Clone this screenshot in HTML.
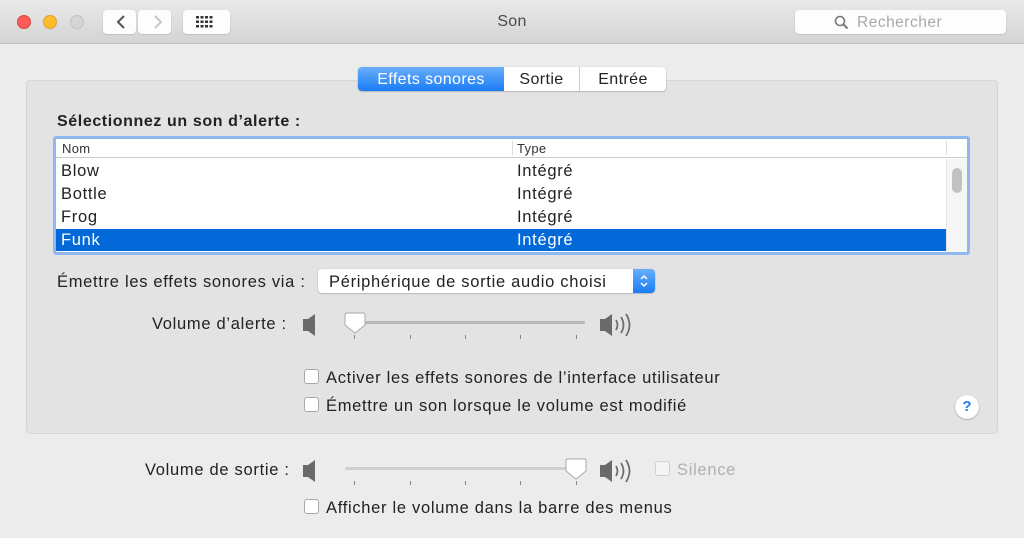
<!DOCTYPE html>
<html><head><meta charset="utf-8"><style>
*{margin:0;padding:0;box-sizing:border-box}
body{width:1024px;height:538px;background:#ececec;font-family:"Liberation Sans",sans-serif;color:#222;position:relative;overflow:hidden;font-size:16.5px;letter-spacing:.7px}
.a{position:absolute;white-space:nowrap}
.tb{position:absolute;left:0;top:0;width:1024px;height:44px;background:linear-gradient(#e9e9e9,#d4d4d4);border-bottom:1px solid #bdbdbd}
.dot{position:absolute;top:15px;width:14px;height:14px;border-radius:50%}
.btn{position:absolute;background:#fdfdfd;border-radius:4px;box-shadow:0 0.5px 1px #aaa}
.cb{position:absolute;width:15px;height:15px;border:1px solid #a9a9a9;border-radius:3px;background:#fff}
</style></head><body>
<div class="tb">
<div class="dot" style="left:17px;background:#fc5b57;border:1px solid #e0443e"></div>
<div class="dot" style="left:43px;background:#fdbb2e;border:1px solid #dea123"></div>
<div class="dot" style="left:70px;background:#d5d5d5;border:1px solid #c2c2c2"></div>
<div class="btn" style="left:103px;top:10px;width:33px;height:24px"></div>
<div class="btn" style="left:138px;top:10px;width:33px;height:24px"></div>
<svg class="a" style="left:103px;top:10px" width="70" height="24"><path d="M21 6 L15 12 L21 18" stroke="#555" stroke-width="2" fill="none"/><path d="M52 6 L58 12 L52 18" stroke="#c8c8c8" stroke-width="2" fill="none"/></svg>
<div class="btn" style="left:183px;top:10px;width:47px;height:24px"></div>
<svg class="a" style="left:196px;top:15px" width="20" height="14"><g fill="#333">
<rect x="0" y="1" width="3" height="2.5"/><rect x="4.5" y="1" width="3" height="2.5"/><rect x="9" y="1" width="3" height="2.5"/><rect x="13.5" y="1" width="3" height="2.5"/>
<rect x="0" y="5.5" width="3" height="2.5"/><rect x="4.5" y="5.5" width="3" height="2.5"/><rect x="9" y="5.5" width="3" height="2.5"/><rect x="13.5" y="5.5" width="3" height="2.5"/>
<rect x="0" y="10" width="3" height="2.5"/><rect x="4.5" y="10" width="3" height="2.5"/><rect x="9" y="10" width="3" height="2.5"/><rect x="13.5" y="10" width="3" height="2.5"/></g></svg>
<div class="a" style="left:0;width:1024px;text-align:center;top:13px;font-size:16px;letter-spacing:.3px;color:#4a4a4a">Son</div>
<div class="btn" style="left:795px;top:10px;width:211px;height:24px"></div>
<svg class="a" style="left:834px;top:15px" width="16" height="16"><circle cx="6" cy="6" r="4.5" stroke="#777" stroke-width="1.6" fill="none"/><path d="M9.5 9.5 L13.5 13.5" stroke="#777" stroke-width="2"/></svg>
<div class="a" style="left:857px;top:14px;color:#a9a9a9;font-size:15.5px;letter-spacing:.5px">Rechercher</div>
</div>

<div class="a" style="left:26px;top:80px;width:972px;height:354px;background:#e3e3e3;border:1px solid #d6d6d6;border-radius:4px"></div>

<div class="a" style="left:358px;top:67px;width:308px;height:24px;background:#fff;border-radius:4px;box-shadow:0 0.5px 1.5px #999"></div>
<div class="a" style="left:358px;top:67px;width:146px;height:24px;background:linear-gradient(#69aefb,#1a7cf5);border-radius:4px 0 0 4px;color:#fff;text-align:center;line-height:25px;font-size:16px;letter-spacing:.4px">Effets sonores</div>
<div class="a" style="left:504px;top:67px;width:76px;height:24px;line-height:25px;text-align:center;font-size:16px;letter-spacing:.4px;border-right:1px solid #ccc">Sortie</div>
<div class="a" style="left:580px;top:67px;width:86px;line-height:25px;text-align:center;font-size:16px;letter-spacing:.4px">Entrée</div>

<div class="a" style="left:57px;top:113px;font-weight:bold;font-size:16px;letter-spacing:.6px">Sélectionnez un son d’alerte :</div>

<div class="a" style="left:53px;top:136px;width:917px;height:119px;border:3px solid #8fb8ee;border-radius:3px;background:#fff"></div>
<div class="a" style="left:56px;top:139px;width:911px;height:19px;border-bottom:1px solid #ccc;font-size:13px;letter-spacing:.3px;color:#333"><span class="a" style="left:6px;top:2px">Nom</span><span class="a" style="left:461px;top:2px">Type</span><span class="a" style="left:456px;top:2px;width:1px;height:14px;background:#ddd"></span><span class="a" style="left:890px;top:2px;width:1px;height:14px;background:#ddd"></span></div>
<div class="a" style="left:946px;top:159px;width:21px;height:93px;background:#f6f6f6;border-left:1px solid #e4e4e4"></div>
<div class="a" style="left:952px;top:168px;width:10px;height:25px;background:#c1c1c1;border-radius:5px"></div>
<div class="a" style="left:61px;top:162px">Blow</div><div class="a" style="left:517px;top:162px">Intégré</div>
<div class="a" style="left:61px;top:185px">Bottle</div><div class="a" style="left:517px;top:185px">Intégré</div>
<div class="a" style="left:61px;top:208px">Frog</div><div class="a" style="left:517px;top:208px">Intégré</div>
<div class="a" style="left:56px;top:229px;width:890px;height:22px;background:#0369d9"></div>
<div class="a" style="left:61px;top:231px;color:#fff">Funk</div><div class="a" style="left:517px;top:231px;color:#fff">Intégré</div>

<div class="a" style="left:57px;top:273px">Émettre les effets sonores via :</div>
<div class="a" style="left:318px;top:269px;width:337px;height:24px;background:#fff;border-radius:4px;box-shadow:0 0.5px 1.5px #999"></div>
<div class="a" style="left:329px;top:273px">Périphérique de sortie audio choisi</div>
<div class="a" style="left:633px;top:269px;width:22px;height:24px;background:linear-gradient(#69aefb,#1a7cf5);border-radius:0 4px 4px 0"></div>
<svg class="a" style="left:633px;top:269px" width="22" height="24"><path d="M8 10 L11 7 L14 10 M8 14 L11 17 L14 14" stroke="#fff" stroke-width="1.5" fill="none"/></svg>

<div class="a" style="left:152px;top:315px">Volume d’alerte :</div>
<svg class="a" style="left:300px;top:310px" width="345" height="35">
<path d="M3 9 H8 L15 4 V26 L8 21 H3 Z" fill="#6a6a6a"/>
<rect x="45" y="11" width="240" height="3" rx="1.5" fill="#b9b9b9"/>
<g fill="#888"><rect x="54" y="25" width="1" height="4"/><rect x="110" y="25" width="1" height="4"/><rect x="165" y="25" width="1" height="4"/><rect x="220" y="25" width="1" height="4"/><rect x="276" y="25" width="1" height="4"/></g>
<path d="M45 5 Q45 3 47 3 H63 Q65 3 65 5 V15 L55 23 L45 15 Z" fill="#fff" stroke="#aaa" stroke-width="1"/>
<path d="M300 9 H305 L312 4 V26 L305 21 H300 Z" fill="#6a6a6a"/>
<path d="M316 10 Q319 15 316 20 M321 7 Q326 15 321 23 M326 4 Q333 15 326 26" stroke="#6a6a6a" stroke-width="1.7" fill="none"/>
</svg>

<div class="cb" style="left:304px;top:369px"></div>
<div class="a" style="left:326px;top:369px">Activer les effets sonores de l’interface utilisateur</div>
<div class="cb" style="left:304px;top:397px"></div>
<div class="a" style="left:326px;top:397px">Émettre un son lorsque le volume est modifié</div>

<div class="a" style="left:955px;top:395px;width:24px;height:24px;border-radius:50%;background:#fff;box-shadow:0 0.5px 1.5px #888;color:#1a7cf5;font-weight:bold;text-align:center;line-height:24px;font-size:15px;letter-spacing:0">?</div>

<div class="a" style="left:145px;top:461px">Volume de sortie :</div>
<svg class="a" style="left:300px;top:456px" width="345" height="35">
<path d="M3 9 H8 L15 4 V26 L8 21 H3 Z" fill="#6a6a6a"/>
<rect x="45" y="11" width="240" height="3" rx="1.5" fill="#cfcfcf"/>
<g fill="#888"><rect x="54" y="25" width="1" height="4"/><rect x="110" y="25" width="1" height="4"/><rect x="165" y="25" width="1" height="4"/><rect x="220" y="25" width="1" height="4"/><rect x="276" y="25" width="1" height="4"/></g>
<path d="M266 5 Q266 3 268 3 H284 Q286 3 286 5 V15 L276 23 L266 15 Z" fill="#fff" stroke="#aaa" stroke-width="1"/>
<path d="M300 9 H305 L312 4 V26 L305 21 H300 Z" fill="#6a6a6a"/>
<path d="M316 10 Q319 15 316 20 M321 7 Q326 15 321 23 M326 4 Q333 15 326 26" stroke="#6a6a6a" stroke-width="1.7" fill="none"/>
</svg>
<div class="cb" style="left:655px;top:461px;border-color:#d0d0d0;background:#f4f4f4"></div>
<div class="a" style="left:677px;top:461px;color:#b0b0b0">Silence</div>
<div class="cb" style="left:304px;top:499px"></div>
<div class="a" style="left:326px;top:499px">Afficher le volume dans la barre des menus</div>
</body></html>
